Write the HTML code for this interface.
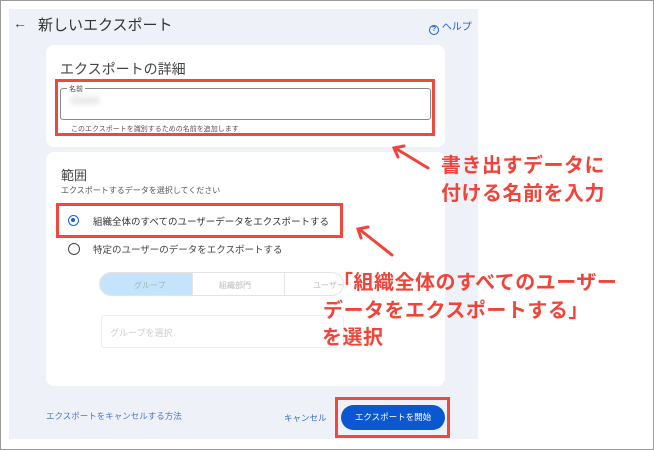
<!DOCTYPE html>
<html><head><meta charset="utf-8"><style>
*{margin:0;padding:0;box-sizing:border-box}
body{width:654px;height:450px;background:#fff;position:relative;overflow:hidden;font-family:"Liberation Sans","Noto Sans CJK JP",sans-serif;color:#3c4043}
.frame{position:absolute;left:0;top:0;width:654px;height:450px;border:1px solid #9a9a9a}
.panel{position:absolute;left:9px;top:9px;width:469px;height:430px;background:#eef1f7}
.card{position:absolute;background:#fff;border-radius:8px}
.red{position:absolute;border:3px solid #f0483e}
.a{position:absolute;color:#f0443a;font-weight:bold;font-size:20px;white-space:nowrap;letter-spacing:0.5px}
.t{position:absolute;white-space:nowrap}
</style></head><body>
<div class="frame"></div>
<div class="panel"></div>
<div class="t" style="left:13px;top:15px;font-size:14px;color:#444">←</div>
<div class="t" style="left:38px;top:14px;font-size:15px;color:#333">新しいエクスポート</div>
<div class="t" style="left:429px;top:18px;font-size:10px;color:#1a5fd0"><span style="display:inline-block;width:10px;height:10px;border:1.5px solid #1a5fd0;border-radius:50%;font-size:7px;line-height:7px;text-align:center;font-weight:bold;vertical-align:-1px">?</span> ヘルプ</div>

<div class="card" style="left:46px;top:45px;width:399px;height:102px"></div>
<div class="t" style="left:60px;top:59px;font-size:14px;color:#444">エクスポートの詳細</div>
<div style="position:absolute;left:60px;top:88px;width:371px;height:32px;border:1px solid #888;border-radius:3px"></div>
<div class="t" style="left:67px;top:84px;font-size:7px;background:#fff;padding:0 2px;color:#444">名前</div>
<div style="position:absolute;left:70px;top:96px;width:30px;height:9px;background:#ececec;border-radius:4px;filter:blur(2px)"></div>
<div class="t" style="left:71px;top:124px;font-size:7px;color:#555">このエクスポートを識別するための名前を追加します</div>
<div class="red" style="left:55px;top:79px;width:380px;height:57px"></div>

<div class="card" style="left:46px;top:152px;width:399px;height:234px"></div>
<div class="t" style="left:61px;top:165px;font-size:13px;color:#444">範囲</div>
<div class="t" style="left:61px;top:185px;font-size:8px;color:#555">エクスポートするデータを選択してください</div>
<div style="position:absolute;left:68px;top:215px;width:11px;height:11px;border:1.5px solid #1a5fd0;border-radius:50%"><div style="position:absolute;left:2px;top:2px;width:4px;height:4px;background:#1a5fd0;border-radius:50%"></div></div>
<div class="t" style="left:93px;top:214px;font-size:9.5px;color:#333">組織全体のすべてのユーザーデータをエクスポートする</div>
<div class="red" style="left:56px;top:203px;width:287px;height:35px"></div>
<div style="position:absolute;left:68px;top:243px;width:12px;height:12px;border:1.5px solid #444;border-radius:50%"></div>
<div class="t" style="left:93px;top:242px;font-size:9.5px;color:#444">特定のユーザーのデータをエクスポートする</div>
<div style="position:absolute;left:99px;top:272px;width:245px;height:24px;border:1px solid #e4e4e4;border-radius:12px;overflow:hidden">
<div style="position:absolute;left:0;top:0;width:92px;height:24px;background:#c5e3fb"></div>
<div style="position:absolute;left:92px;top:0;width:1px;height:24px;background:#e4e4e4"></div>
<div style="position:absolute;left:184px;top:0;width:1px;height:24px;background:#e4e4e4"></div>
<div class="t" style="left:34px;top:7px;font-size:8px;color:#9bb">グループ</div>
<div class="t" style="left:119px;top:7px;font-size:8px;color:#bbb">組織部門</div>
<div class="t" style="left:213px;top:7px;font-size:8px;color:#bbb">ユーザー</div>
</div>
<div style="position:absolute;left:101px;top:315px;width:243px;height:33px;border:1px solid #eee;border-radius:3px"></div>
<div class="t" style="left:110px;top:326px;font-size:9px;color:#ccc">グループを選択</div>

<div class="t" style="left:46px;top:410px;font-size:8.5px;color:#4a78c8">エクスポートをキャンセルする方法</div>
<div class="t" style="left:284px;top:412px;font-size:8.5px;color:#3a6cc0">キャンセル</div>
<div style="position:absolute;left:341px;top:405px;width:104px;height:25px;background:#0b57d0;border-radius:13px;color:#fff;font-size:8.5px;text-align:center;line-height:25px">エクスポートを開始</div>
<div class="red" style="left:335px;top:397px;width:115px;height:41px"></div>

<svg style="position:absolute;left:0;top:0" width="654" height="450">
<g stroke="#f0443a" stroke-width="3" fill="none" stroke-linecap="round">
<line x1="428" y1="168" x2="395" y2="148"/><polyline points="404,146 394,148 398,157"/>
<line x1="392" y1="255" x2="359" y2="229"/><polyline points="368,227 358,229 361,238"/>
</g></svg>
<div class="a" style="left:441px;top:149px">書き出すデータに</div>
<div class="a" style="left:441px;top:177px">付ける名前を入力</div>
<div class="a" style="left:333px;top:266px">「組織全体のすべてのユーザー</div>
<div class="a" style="left:323px;top:294px">データをエクスポートする」</div>
<div class="a" style="left:322px;top:321px">を選択</div>
</body></html>
